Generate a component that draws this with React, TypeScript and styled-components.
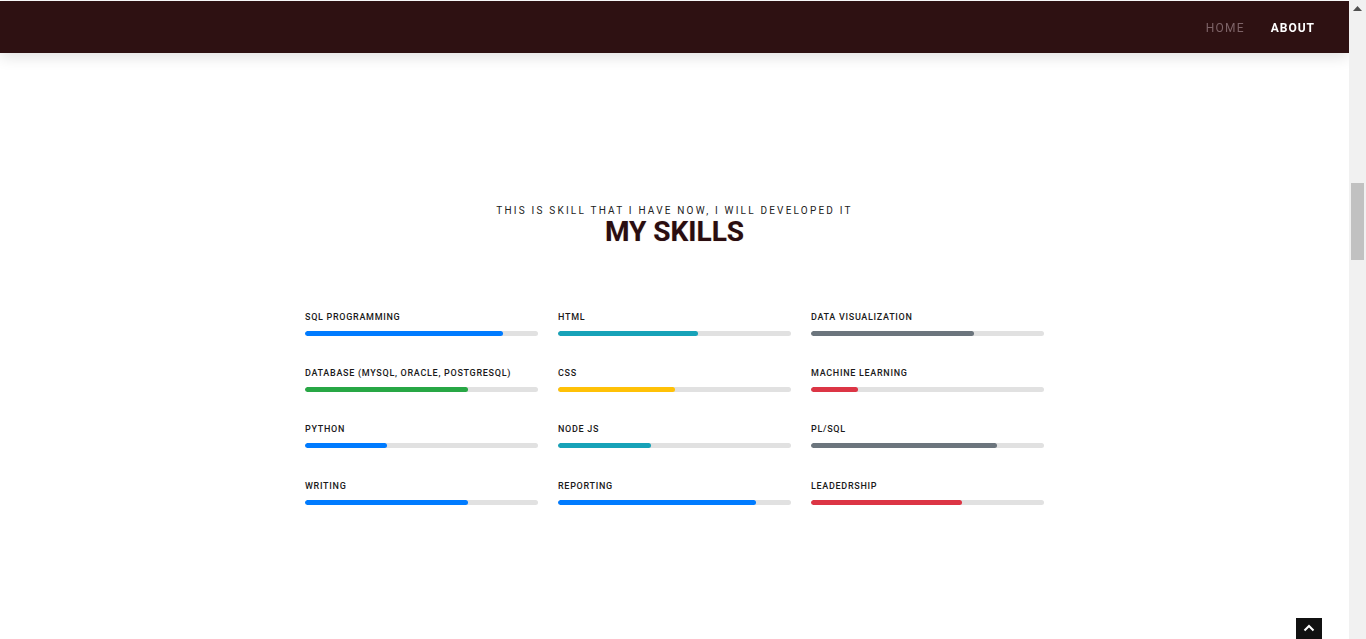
import React, { useLayoutEffect } from "react";
import styled, { createGlobalStyle } from "styled-components";

const GlobalStyle = createGlobalStyle`
  html, body {
    margin: 0;
    padding: 0;
    background: #ffffff;
    font-family: Roboto, "Liberation Sans", Arial, sans-serif;
  }
  body {
    padding-right: 17px;
  }
  * { box-sizing: border-box; }
`;

const NavBar = styled.header`
  position: fixed;
  top: 1px;
  left: 0;
  right: 17px;
  height: 52px;
  background: #2e1112;
  display: flex;
  align-items: center;
  justify-content: flex-end;
  padding: 0 34px 0 0;
  gap: 26px;
  box-shadow: 0 4px 14px rgba(0, 0, 0, 0.12);
  z-index: 10;
`;

const NavLink = styled.a<{ $active?: boolean }>`
  font-family: Roboto, "Liberation Sans", Arial, sans-serif;
  font-size: 12px;
  letter-spacing: ${(p) => (p.$active ? "1px" : "1.2px")};
  font-weight: ${(p) => (p.$active ? 700 : 400)};
  color: ${(p) => (p.$active ? "#ffffff" : "#7d6367")};
  text-decoration: none;
  text-transform: uppercase;
  line-height: 1;
  margin-top: 1px;
`;

const ScrollRail = styled.div`
  position: fixed;
  top: 0;
  right: 0;
  bottom: 0;
  width: 17px;
  background: #f1f1f1;
  display: flex;
  flex-direction: column;
  align-items: center;
  z-index: 20;
`;

const RailArrow = styled.div`
  height: 17px;
  width: 17px;
  display: flex;
  align-items: center;
  justify-content: center;
`;

const RailTrack = styled.div`
  flex: 1;
  width: 100%;
  padding: 166px 2px 0;
`;

const RailThumb = styled.div`
  height: 77px;
  background: #c1c1c1;
`;

const Earlier = styled.section`
  height: 1377px;
`;

const Later = styled.section`
  height: 3000px;
`;

const SkillsSection = styled.section`
  padding: 205px 0 120px;
  display: flex;
  flex-direction: column;
  align-items: center;
`;

const SubTitle = styled.p`
  margin: 0;
  font-size: 10px;
  line-height: 12px;
  letter-spacing: 2.2px;
  color: #222222;
  text-transform: uppercase;
`;

const Title = styled.h2`
  margin: 0;
  font-size: 28px;
  line-height: 30px;
  font-weight: 700;
  color: #2a0d10;
  text-shadow: 0 0 1px rgba(120, 60, 20, 0.35);
`;

const Grid = styled.div`
  margin-top: 64px;
  width: 739px;
  display: grid;
  grid-template-columns: repeat(3, 233px);
  column-gap: 20px;
  row-gap: 31.2px;
`;

const Skill = styled.div`
  display: flex;
  flex-direction: column;
  gap: 8px;
`;

const Label = styled.span`
  font-size: 9px;
  line-height: 12px;
  font-weight: 500;
  letter-spacing: 0.7px;
  color: #1a1a1a;
  text-transform: uppercase;
`;

const Track = styled.div`
  height: 5px;
  border-radius: 3px;
  background: #e1e1e1;
  overflow: hidden;
`;

const Fill = styled.div<{ $color: string }>`
  height: 100%;
  border-radius: 3px;
  background: ${(p) => p.$color};
`;

const ToTop = styled.a`
  position: fixed;
  right: 44px;
  bottom: -6px;
  width: 26px;
  height: 27px;
  background: #111111;
  display: flex;
  align-items: flex-start;
  justify-content: center;
  padding-top: 6px;
  z-index: 11;
`;

const C = {
  blue: "#007bff",
  green: "#28a745",
  teal: "#17a2b8",
  yellow: "#ffc107",
  gray: "#6c757d",
  red: "#dc3545",
};

const skills: { name: string; pct: number; color: string }[] = [
  { name: "SQL Programming", pct: 85, color: C.blue },
  { name: "HTML", pct: 60, color: C.teal },
  { name: "Data Visualization", pct: 70, color: C.gray },
  { name: "Database (MySQL, Oracle, PostgreSQL)", pct: 70, color: C.green },
  { name: "CSS", pct: 50, color: C.yellow },
  { name: "Machine Learning", pct: 20, color: C.red },
  { name: "Python", pct: 35, color: C.blue },
  { name: "Node JS", pct: 40, color: C.teal },
  { name: "PL/SQL", pct: 80, color: C.gray },
  { name: "Writing", pct: 70, color: C.blue },
  { name: "Reporting", pct: 85, color: C.blue },
  { name: "Leadedrship", pct: 65, color: C.red },
];

export default function App() {
  useLayoutEffect(() => {
    window.scrollTo(0, 1377);
  }, []);

  return (
    <>
      <GlobalStyle />
      <NavBar>
        <NavLink href="#home">Home</NavLink>
        <NavLink href="#about" $active>
          About
        </NavLink>
      </NavBar>
      <Earlier id="home" />
      <SkillsSection id="skills">
        <SubTitle>This is skill that I have now, I will developed it</SubTitle>
        <Title>MY SKILLS</Title>
        <Grid>
          {skills.map((s) => (
            <Skill key={s.name}>
              <Label>{s.name}</Label>
              <Track>
                <Fill $color={s.color} style={{ width: `${s.pct}%` }} />
              </Track>
            </Skill>
          ))}
        </Grid>
      </SkillsSection>
      <Later />
      <ToTop href="#home" aria-label="Back to top">
        <svg width="12" height="8" viewBox="0 0 12 8" fill="none">
          <path d="M1.5 6.5 L6 2 L10.5 6.5" stroke="#ffffff" strokeWidth="2" />
        </svg>
      </ToTop>
      <ScrollRail aria-hidden="true">
        <RailArrow>
          <svg width="9" height="5" viewBox="0 0 9 5">
            <path d="M0 5 L4.5 0 L9 5 Z" fill="#505050" />
          </svg>
        </RailArrow>
        <RailTrack>
          <RailThumb />
        </RailTrack>
      </ScrollRail>
    </>
  );
}
